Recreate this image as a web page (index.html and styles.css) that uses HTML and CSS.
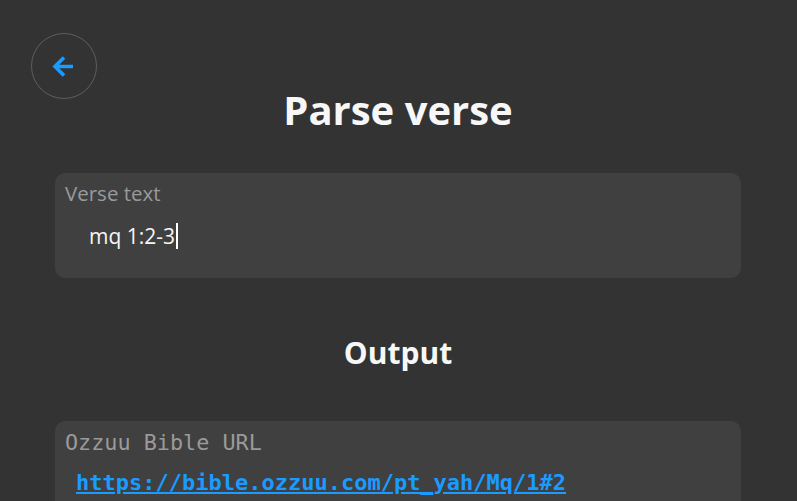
FILE: index.html
```html
<!DOCTYPE html>
<html>
<head>
<meta charset="utf-8">
<link rel="stylesheet" href="styles.css">
</head>
<body>
<div class="page">
  <button class="back" aria-label="Back">
    <svg width="24" height="24" viewBox="0 0 24 24"><path d="M22 12.5H4.5M13 3.5L4 12.5 13 21.5" fill="none" stroke="#1a9bff" stroke-width="3.6" stroke-linecap="butt" stroke-linejoin="miter"/></svg>
  </button>
  <h1 class="title">Parse verse</h1>
  <div class="card input-card">
    <div class="label">Verse text</div>
    <div class="value">mq 1:2-3<span class="caret"></span></div>
  </div>
  <h2 class="subtitle">Output</h2>
  <div class="card out-card">
    <div class="label mono">Ozzuu Bible URL</div>
    <a class="link" href="#">https://bible.ozzuu.com/pt_yah/Mq/1#2</a>
  </div>
</div>
</body>
</html>
```
FILE: styles.css
```css
html, body {
  margin: 0;
  padding: 0;
  background: #333333;
  height: 100%;
  overflow: hidden;
}
body {
  font-family: "Open Sans", "Noto Sans", sans-serif;
  color: #f5f5f5;
}
.page {
  position: relative;
  padding: 83px 56px 0 55px;
  display: flex;
  flex-direction: column;
}
.back {
  position: absolute;
  top: 33px;
  left: 31px;
  width: 66px;
  height: 66px;
  box-sizing: border-box;
  border-radius: 50%;
  border: 1px solid #5e5e5e;
  background: transparent;
  display: flex;
  align-items: center;
  justify-content: center;
  padding: 0 3px 0 0;
  margin: 0;
}
.title {
  margin: 0;
  text-align: center;
  font-size: 40px;
  font-weight: 700;
  line-height: 54px;
  color: #f7f7f7;
}
.card {
  background: #404040;
  border-radius: 10px;
  padding: 6px 10px;
  box-sizing: border-box;
}
.input-card {
  margin-top: 36px;
  height: 105px;
}
.label {
  font-size: 20.5px;
  line-height: 28px;
  color: #9a9a9a;
}
.value {
  margin: 15px 0 0 24px;
  font-size: 21px;
  line-height: 28px;
  color: #f5f5f5;
  display: flex;
  align-items: center;
}
.caret {
  display: inline-block;
  width: 1.5px;
  height: 26px;
  background: #ffffff;
  margin-left: 1px;
}
.subtitle {
  margin: 55px 0 0 0;
  text-align: center;
  font-size: 30px;
  font-weight: 700;
  line-height: 40px;
  color: #f7f7f7;
}
.out-card {
  margin-top: 48px;
  height: 120px;
  padding-top: 8px;
}
.mono {
  font-family: "DejaVu Sans Mono", monospace;
  font-size: 21.8px;
  line-height: 28px;
}
.link {
  display: block;
  margin: 12px 0 0 11px;
  font-family: "DejaVu Sans Mono", monospace;
  font-weight: 700;
  font-size: 22px;
  line-height: 28px;
  color: #1a9bff;
  text-decoration: underline;
}
```
